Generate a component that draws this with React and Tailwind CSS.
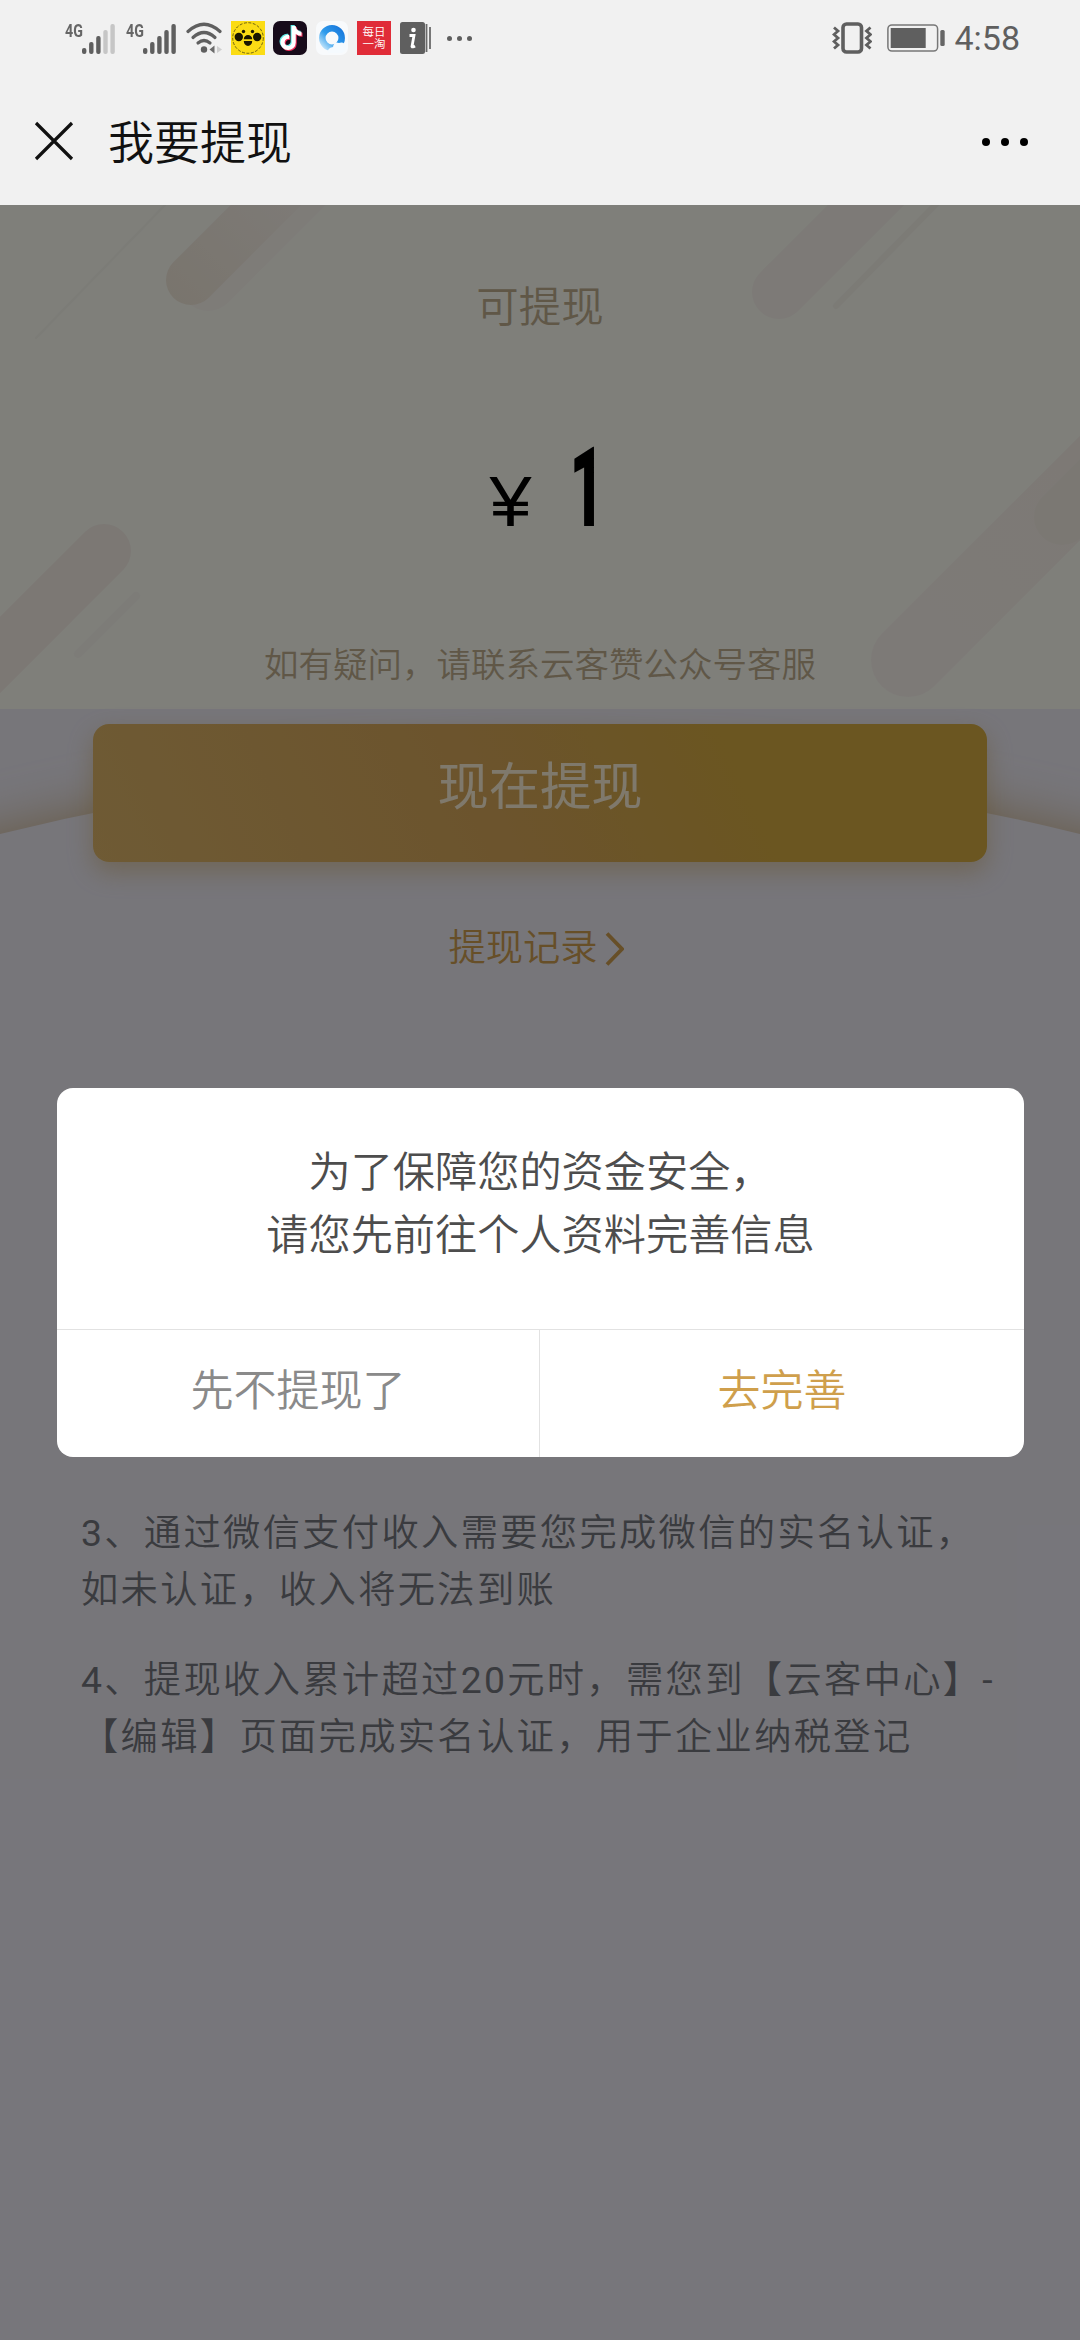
// Withdraw page with the "complete your profile" confirmation dialog
import { FaTiktok } from 'react-icons/fa';

function Signal({ level }) {
    const bars = [6, 12, 18, 24, 30];

    return (
        <div className="flex items-start">
            <span className="w-[17px] origin-left scale-x-75 text-[19px] leading-[16px] font-bold text-[#666]">4G</span>
            <svg className="h-[31px] w-[34px]" viewBox="0 0 34 31">
                {bars.map((h, i) => (
                    <rect
                        key={h}
                        x={i * 7.1}
                        y={31 - h}
                        width="4.4"
                        height={h}
                        rx="2"
                        fill={i < level ? '#5f5f5f' : '#c6c6c6'}
                    />
                ))}
            </svg>
        </div>
    );
}

function WifiIcon() {
    return (
        <svg className="h-8 w-[38px]" viewBox="0 0 38 32" fill="none" stroke="#5f5f5f" strokeWidth="3.2" strokeLinecap="round">
            <path d="M2 9.5Q18 -5 34 9.5" />
            <path d="M7 15.5Q18 5.5 29 15.5" />
            <path d="M12 21Q18 16 24 21" />
            <circle cx="18" cy="27.5" r="3.2" fill="#5f5f5f" stroke="none" />
            <path d="M28.5 23.5V31.5L23.5 27.5Z" fill="#6b6b6b" stroke="none" />
            <path d="M31 24V31L36 27.5Z" fill="#cfcfcf" stroke="none" />
        </svg>
    );
}

function BeeIcon() {
    return (
        <svg className="size-[34px]" viewBox="0 0 34 34">
            <rect width="34" height="34" fill="#fbdc14" />
            <circle cx="17" cy="17" r="15.3" fill="none" stroke="#4a4210" strokeWidth=".8" strokeDasharray="3 1.5" />
            <circle cx="12.5" cy="10.5" r="1.7" fill="#1a1600" />
            <circle cx="21.5" cy="10.5" r="1.7" fill="#1a1600" />
            <circle cx="7.8" cy="16" r="4.2" fill="#1a1600" />
            <circle cx="26.2" cy="16" r="4.2" fill="#1a1600" />
            <path d="M12.8 18.3A4.2 4.2 0 0 1 21.2 18.3ZM12.8 20H21.2A4.2 5 0 0 1 12.8 20Z" fill="#1a1600" />
        </svg>
    );
}

function TiktokIcon() {
    return (
        <div className="relative size-[34px] rounded-[7px] bg-[#170b1a]">
            <FaTiktok className="absolute top-[4px] left-[5px] size-[24px] text-[#5fe9e6]" />
            <FaTiktok className="absolute top-[6px] left-[7px] size-[24px] text-[#f0315c]" />
            <FaTiktok className="absolute top-[5px] left-[6px] size-[24px] text-white" />
        </div>
    );
}

function BrowserIcon() {
    return (
        <svg className="size-[34px]" viewBox="0 0 34 34">
            <defs>
                <linearGradient id="ring" x1="1" y1="0" x2="0" y2="1">
                    <stop offset="0" stopColor="#1878dc" />
                    <stop offset=".55" stopColor="#2f9cec" />
                    <stop offset="1" stopColor="#c4e6fb" />
                </linearGradient>
            </defs>
            <rect x="1" y="0" width="32" height="34" rx="7" fill="#f8fafc" />
            <circle cx="17" cy="17" r="9.7" fill="none" stroke="url(#ring)" strokeWidth="6.5" />
            <path d="M13 32Q12 27 18 26Q19 20 24 22Q30 20 31 27Q30 32 25 32Z" fill="#f5fafe" />
        </svg>
    );
}

function NewsIcon() {
    return (
        <svg className="size-[34px]" viewBox="0 0 34 34">
            <rect x="1" y="1" width="25" height="32" rx="2.5" fill="#5f5f5f" />
            <path d="M27.5 3V31M31 6V28" stroke="#6a6a6a" strokeWidth="1.8" />
            <circle cx="14.5" cy="9" r="2.3" fill="#fff" />
            <path d="M10.5 14.5H15L13 25.5Q13.5 26.5 16 25" fill="none" stroke="#fff" strokeWidth="2.8" />
        </svg>
    );
}

function VibrateIcon() {
    return (
        <svg className="h-8 w-10" viewBox="0 0 40 32" fill="none" stroke="#5f5f5f">
            <rect x="11" y="2" width="18.5" height="28" rx="3.5" strokeWidth="3.6" />
            <path d="M2 5.5L6 9L2 12.5L6 16L2 19.5L6 23L2 26.5" strokeWidth="2.8" />
            <path d="M38.5 5.5L34.5 9L38.5 12.5L34.5 16L38.5 19.5L34.5 23L38.5 26.5" strokeWidth="2.8" />
        </svg>
    );
}

function BatteryIcon() {
    return (
        <svg className="h-7 w-[58px]" viewBox="0 0 58 28">
            <rect x=".9" y=".9" width="49.7" height="26.2" rx="4" fill="none" stroke="#777" strokeWidth="1.5" />
            <rect x="3.7" y="4" width="35" height="20" fill="#5f5f5f" />
            <rect x="53.3" y="6" width="4.4" height="16" rx="1.5" fill="#666" />
        </svg>
    );
}

function StatusBar() {
    return (
        <div className="flex h-[76px] items-center justify-between pr-[60px] pl-[65px]">
            <div className="flex items-center">
                <Signal level={3} />
                <div className="ml-[10px]">
                    <Signal level={5} />
                </div>
                <div className="ml-[9px] flex items-center gap-[8px]">
                    <WifiIcon />
                    <div className="-ml-[1px] flex gap-[8px]">
                        <BeeIcon />
                        <TiktokIcon />
                        <BrowserIcon />
                        <div className="flex size-[34px] flex-col items-center justify-center bg-[#e02c38] text-[11.5px] leading-[12.5px] text-white">
                            <span>每日</span>
                            <span>一淘</span>
                        </div>
                        <NewsIcon />
                    </div>
                </div>
                <div className="ml-[14px] flex gap-[5px]">
                    <i className="size-[5px] rounded-full bg-[#5f5f5f]" />
                    <i className="size-[5px] rounded-full bg-[#5f5f5f]" />
                    <i className="size-[5px] rounded-full bg-[#5f5f5f]" />
                </div>
            </div>
            <div className="flex items-center text-[#5f5f5f]">
                <VibrateIcon />
                <div className="ml-[15px]">
                    <BatteryIcon />
                </div>
                <span className="ml-[9px] text-[34px] leading-[40px] font-normal">4:58</span>
            </div>
        </div>
    );
}

function NavBar() {
    return (
        <div className="flex h-[129px] items-center pr-[52px] pl-[34px]">
            <svg className="h-10 w-10" viewBox="0 0 40 40" stroke="#111" strokeWidth="3.2">
                <path d="M2 2L38 38M38 2L2 38" />
            </svg>
            <h1 className="ml-[34px] pt-[4px] text-[46px] leading-[60px] text-[#111]">我要提现</h1>
            <div className="ml-auto flex gap-[11px] pt-[3px]">
                <i className="size-2 rounded-full bg-black" />
                <i className="size-2 rounded-full bg-black" />
                <i className="size-2 rounded-full bg-black" />
            </div>
        </div>
    );
}

// slanted rounded strips behind the balance
function HeroStrips() {
    return (
        <svg className="absolute inset-0 h-full w-full" viewBox="0 0 1080 504" fill="none" strokeLinecap="round">
            <defs>
                <linearGradient id="stripA" gradientUnits="userSpaceOnUse" x1="175" y1="95" x2="290" y2="-20">
                    <stop offset="0" stopColor="#f3eadb" />
                    <stop offset="1" stopColor="#fbf5ee" />
                </linearGradient>
                <linearGradient id="stripC" gradientUnits="userSpaceOnUse" x1="900" y1="465" x2="1080" y2="285">
                    <stop offset="0" stopColor="#fbf5ef" />
                    <stop offset="1" stopColor="#faf3eb" />
                </linearGradient>
            </defs>
            <path d="M208 78L330 -44" stroke="#fcf8f1" strokeWidth="56" />
            <path d="M191 75L310 -44" stroke="url(#stripA)" strokeWidth="50" />
            <path d="M36 133L165 0" stroke="#f8f8ee" strokeWidth="2" />
            <path d="M779 87L910 -44" stroke="#faf5ee" strokeWidth="54" />
            <path d="M836 101L940 -5" stroke="#f8f6ed" strokeWidth="6" />
            <path d="M908 455L1130 233" stroke="url(#stripC)" strokeWidth="74" />
            <path d="M1062 312L1130 244" stroke="#f7f0e7" strokeWidth="56" />
            <path d="M104 346L-40 490" stroke="#f8f1e9" strokeWidth="54" />
            <path d="M136 391L78 449" stroke="#fbf9f1" strokeWidth="8" />
        </svg>
    );
}

// raised card edge that shows on both sides of the button
function CardEdge() {
    return (
        <svg className="absolute top-[504px] left-0 h-[220px] w-full" viewBox="0 0 1080 220">
            <defs>
                <filter id="soft" x="-20%" y="-50%" width="140%" height="200%">
                    <feGaussianBlur stdDeviation="26" />
                </filter>
            </defs>
            <path d="M-100 151L0 125Q540 -10 1080 125L1180 151V300H-100Z" fill="#cdb289" filter="url(#soft)" />
            <path d="M0 125Q540 -10 1080 125V220H0Z" fill="#eeecf5" />
        </svg>
    );
}

function ConfirmDialog() {
    return (
        <div className="absolute top-[883px] left-[57px] flex h-[369px] w-[967px] flex-col overflow-hidden rounded-[16px] bg-white">
            <div className="h-[241px] pt-[53px] text-center text-[42.2px] leading-[63px] text-[#4d4d4d]">
                <p>为了保障您的资金安全，</p>
                <p>请您先前往个人资料完善信息</p>
            </div>
            <div className="flex flex-1 border-t border-[#e2e2e2] text-[43px]">
                <button className="w-[483px] border-r border-[#e2e2e2] pb-[5px] text-[#8a8a8a]">先不提现了</button>
                <button className="flex-1 pb-[5px] text-[#cf9f4c]">去完善</button>
            </div>
        </div>
    );
}

export default function App() {
    return (
        <div className="flex h-[2340px] w-[1080px] flex-col overflow-hidden bg-[#f1f1f1] font-[Roboto,'Noto_Sans_CJK_SC',sans-serif] font-[350]">
            <StatusBar />
            <NavBar />
            <main className="relative flex-1 overflow-hidden bg-[#eeecf5]">
                <CardEdge />

                {/* Balance */}
                <section className="relative h-[504px] bg-[#fefef5] pt-[71px] text-center">
                    <HeroStrips />
                    <div className="relative">
                        <h2 className="text-[42.5px] leading-[64px] text-[#c0af8f]">可提现</h2>
                        <div className="mt-[93px] flex h-[111px] items-baseline justify-center pl-[19px] leading-[111px] text-black">
                            <span className="scale-x-108 font-['Liberation_Sans'] text-[70px] font-normal">¥</span>
                            <span className="ml-[28px] w-[50px] origin-center scale-x-54 text-[111px] font-black">1</span>
                        </div>
                        <p className="mt-[96px] text-[34.5px] leading-[50px] text-[#c0af8f]">如有疑问，请联系云客赞公众号客服</p>
                    </div>
                </section>

                {/* Withdraw button */}
                <div className="relative mx-[93px] mt-[15px] h-[138px] rounded-[16px] bg-linear-[65deg,#deb66a,#d8a85a_45%,#d6ac42_72%,#d6ac42] text-center text-[51.3px] leading-[128px] font-normal text-[#fff2d8] shadow-[0_10px_24px_rgba(200,155,70,0.4)]">
                    现在提现
                </div>
                <div className="mt-[62px] flex h-[49px] items-center justify-center gap-[7px] pr-[8px] text-[37.3px] leading-[49px] text-[#cf9f50]">
                    提现记录
                    <svg className="h-[34px] w-[19px]" viewBox="0 0 19 34" fill="none" stroke="currentColor" strokeWidth="3.8">
                        <path d="M2 1.5L17 17L2 32.5" />
                    </svg>
                </div>

                {/* Rules */}
                <div className="mt-[532px] pl-[81px] text-[37.3px] leading-[57px] tracking-[2.3px] whitespace-nowrap text-[#74777e]">
                    <p>
                        <span className="font-normal">3</span>、通过微信支付收入需要您完成微信的实名认证，
                        <br />
                        如未认证，收入将无法到账
                    </p>
                    <p className="mt-[33px]">
                        <span className="font-normal">4</span>、提现收入累计超过
                        <span className="font-normal">20</span>元时，需您到【云客中心】
                        <span className="font-normal">-</span>
                        <br />
                        【编辑】页面完成实名认证，用于企业纳税登记
                    </p>
                </div>

                <div className="absolute inset-0 bg-black/50" />
                <ConfirmDialog />
            </main>
        </div>
    );
}
